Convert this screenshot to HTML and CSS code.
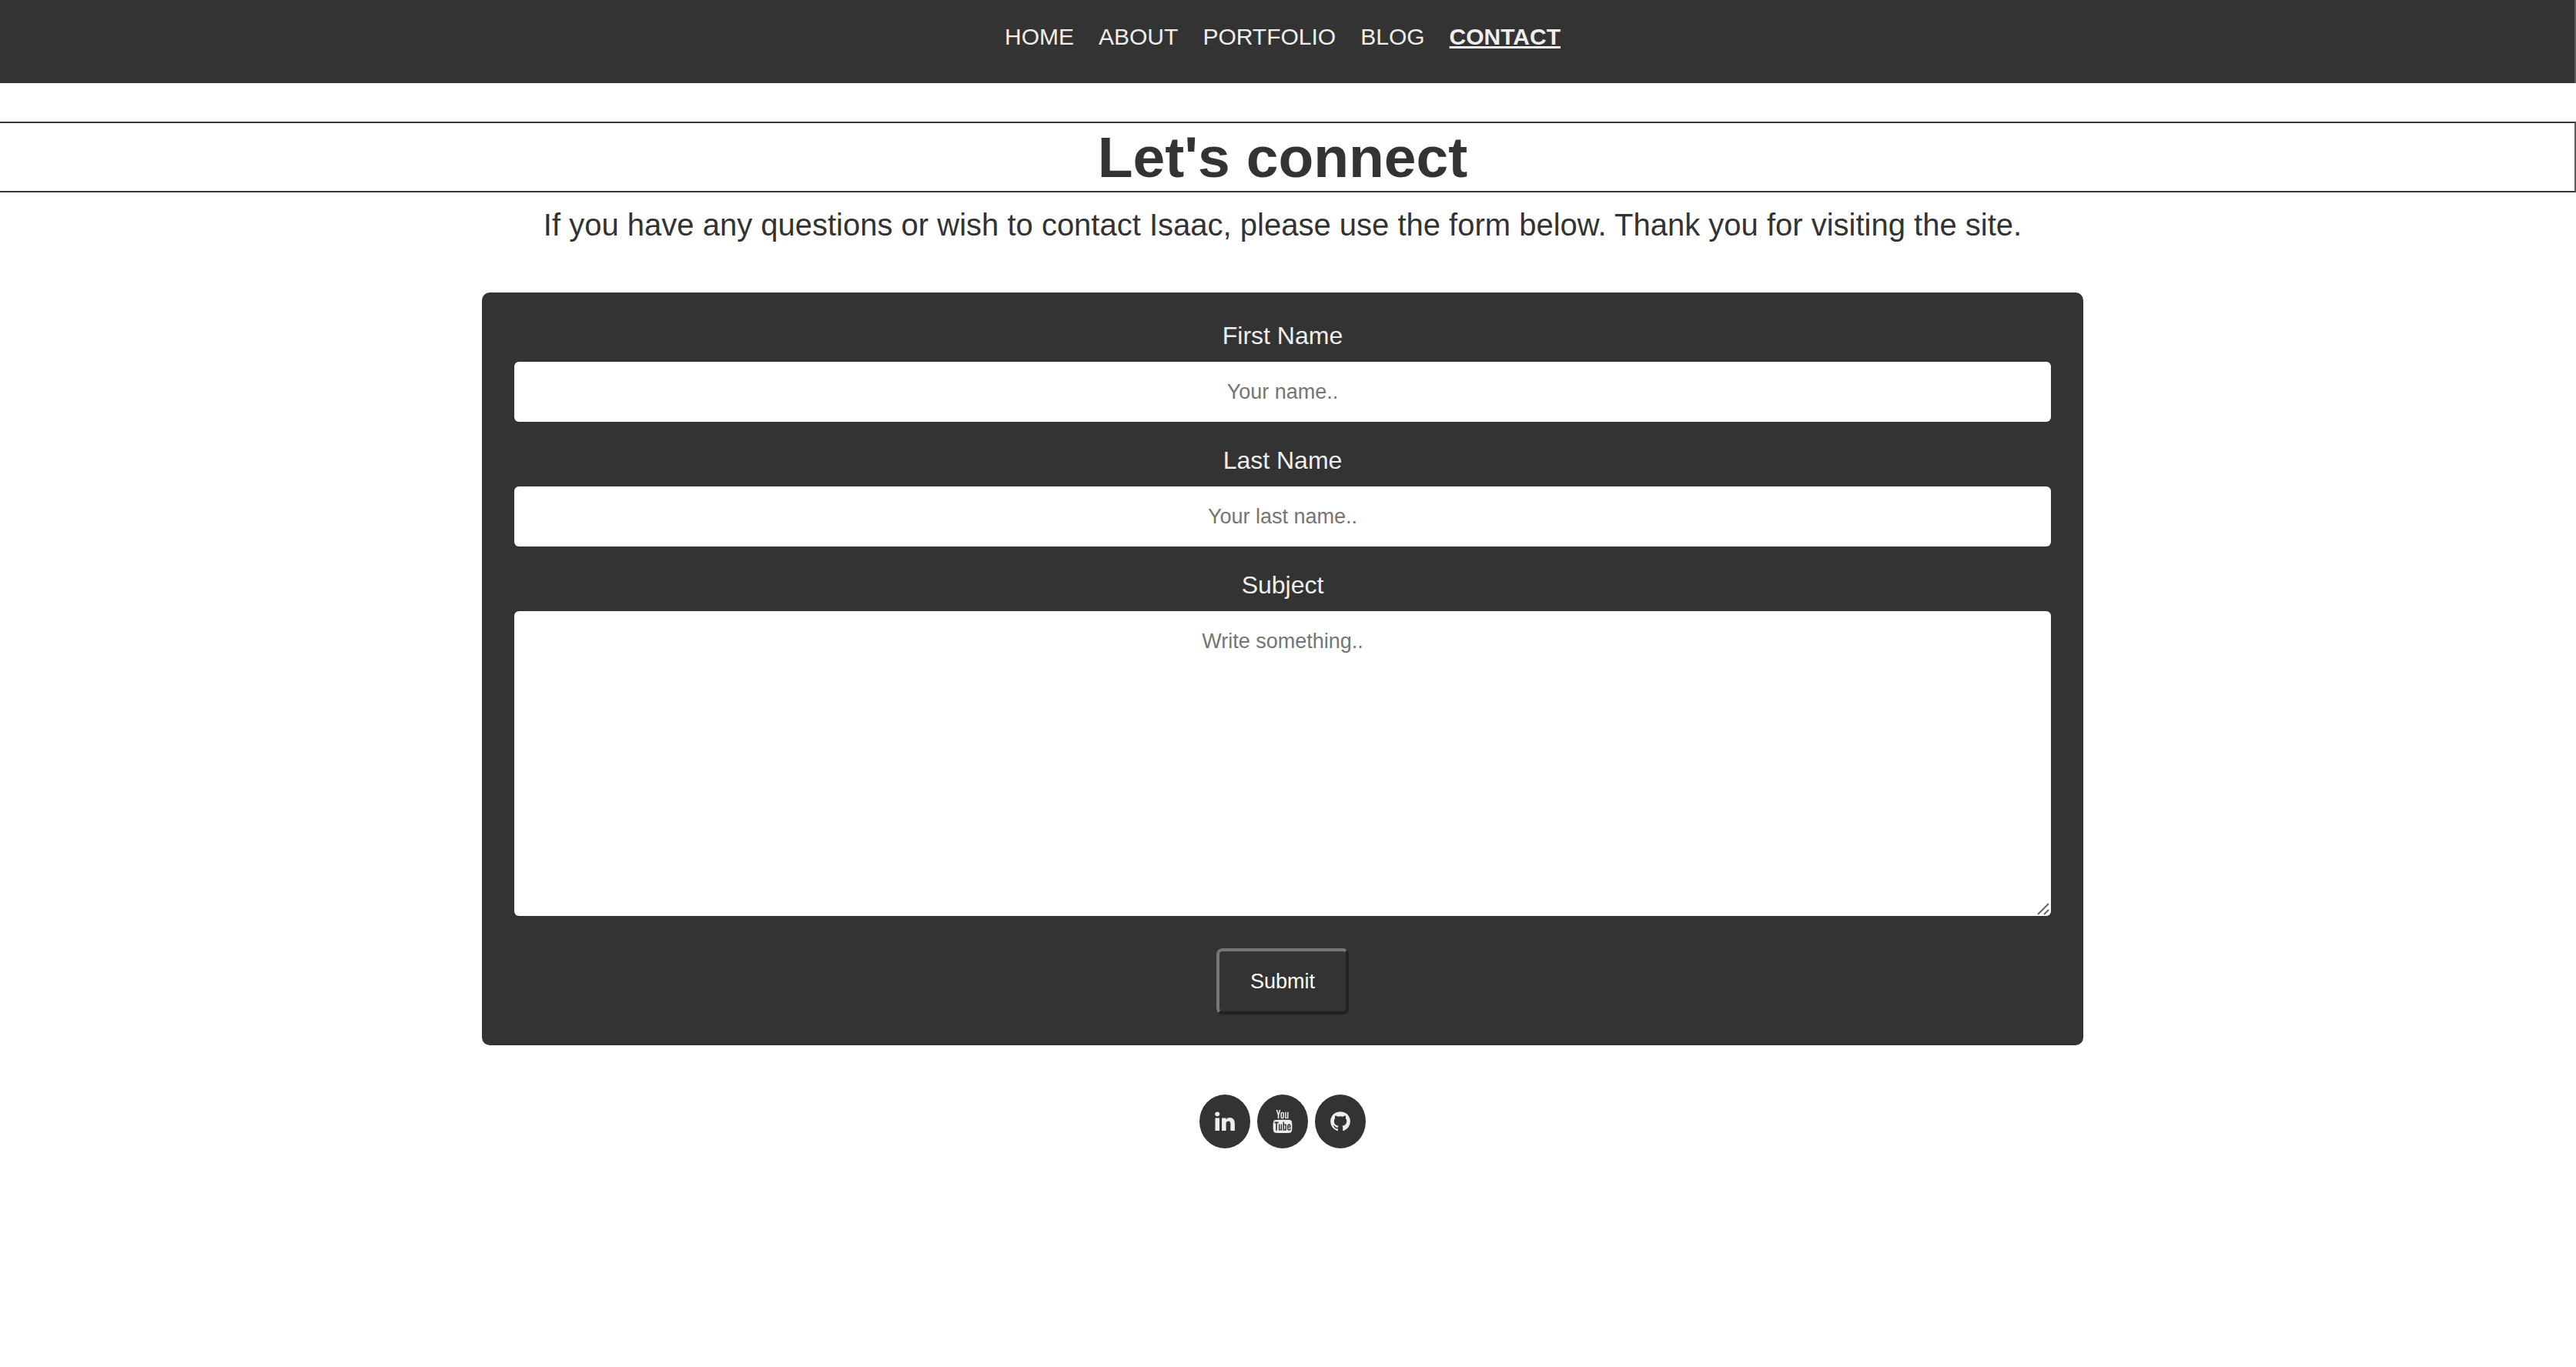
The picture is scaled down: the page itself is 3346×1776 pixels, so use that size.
FILE: index.html
```
<!DOCTYPE html>
<html lang="en">
<head>
  <meta charset="utf-8">
  <meta name="viewport" content="width=device-width, initial-scale=1">
  <title>Contact</title>
  <link rel="stylesheet" href="styles.css">
</head>
<body>
  <header class="site-header">
    <nav class="nav" aria-label="Main">
      <a class="nav-link" href="#home">HOME</a>
      <a class="nav-link" href="#about">ABOUT</a>
      <a class="nav-link" href="#portfolio">PORTFOLIO</a>
      <a class="nav-link" href="#blog">BLOG</a>
      <a class="nav-link nav-link-active" href="#contact" aria-current="page">CONTACT</a>
    </nav>
  </header>
  <main>
    <h1 class="title">Let's connect</h1>
    <div class="content">
      <p class="intro">If you have any questions or wish to contact Isaac, please use the form below. Thank you for visiting the site.</p>
      <form class="form">
        <label class="label" for="fname">First Name</label>
        <input class="field" type="text" id="fname" name="firstname" placeholder="Your name..">
        <label class="label" for="lname">Last Name</label>
        <input class="field" type="text" id="lname" name="lastname" placeholder="Your last name..">
        <label class="label" for="subject">Subject</label>
        <textarea class="field field-large" id="subject" name="subject" placeholder="Write something.."></textarea>
        <button class="submit" type="submit">Submit</button>
      </form>
    </div>
  </main>
  <footer class="social">
    <a class="social-link" href="#linkedin" aria-label="LinkedIn">
      <svg class="icon" viewBox="0 0 1792 1792" aria-hidden="true"><path d="M477 625v991h-330v-991h330zm21-306q1 73-50.5 122t-135.5 49h-2q-82 0-132-49t-50-122q0-74 51.5-122.5t134.5-48.5 133 48.5 51 122.5zm1166 729v568h-329v-530q0-105-40.5-164.5t-126.5-59.5q-63 0-105.5 34.5t-63.5 85.5q-11 30-11 81v553h-329q2-399 2-647t-1-296l-1-48h329v144h-2q20-32 41-56t56.5-52 87-43.5 114.5-15.5q171 0 275 113.5t104 332.5z"/></svg>
    </a>
    <a class="social-link" href="#youtube" aria-label="YouTube">
      <svg class="icon" viewBox="0 0 1792 1792" aria-hidden="true"><path d="M1099 1244v211q0 67-39 67-23 0-45-22v-301q22-22 45-22 39 0 39 67zm338 1v46h-90v-46q0-68 45-68t45 68zm-966-218h107v-94h-312v94h105v569h100v-569zm288 569h89v-494h-89v378q-30 42-57 42-18 0-21-21-1-3-1-35v-364h-89v391q0 49 8 73 12 37 58 37 48 0 102-61v54zm429-148v-197q0-73-9-99-17-56-71-56-50 0-93 54v-217h-89v663h89v-48q45 55 93 55 54 0 71-55 9-27 9-100zm338-10v-13h-91q0 51-2 61-7 36-40 36-46 0-46-69v-87h179v-103q0-79-27-116-39-51-106-51-68 0-107 51-28 37-28 116v173q0 79 29 116 39 51 108 51 72 0 108-53 18-27 21-54 2-9 2-58zm-608-913v-210q0-69-43-69t-43 69v210q0 70 43 70t43-70zm719 751q0 234-26 350-14 59-58 99t-102 46q-184 21-555 21t-555-21q-58-6-102.5-46t-57.5-99q-26-112-26-350 0-234 26-350 14-59 58-99t103-47q183-20 554-20t555 20q58 7 102.5 47t57.5 99q26 112 26 350zm-998-1276h102l-121 399v271h-100v-271q-14-74-61-212-37-103-65-187h106l71 263zm370 333v175q0 81-28 118-38 51-106 51-67 0-105-51-28-38-28-118v-175q0-80 28-117 38-51 105-51 68 0 106 51 28 37 28 117zm335-162v499h-91v-55q-53 62-103 62-46 0-59-37-8-24-8-75v-394h91v367q0 33 1 35 3 22 21 22 27 0 57-43v-381h91z"/></svg>
    </a>
    <a class="social-link" href="#github" aria-label="GitHub">
      <svg class="icon" viewBox="0 0 1792 1792" aria-hidden="true"><path d="M1664 896q0 251-146.500 451.500t-378.500 277.500q-27 5-39.500-7t-12.500-30v-211q0-97-52-142 57-6 102.500-18t94-39 81-66.500 53-105 20.500-150.500q0-121-79-206 37-91-8-204-28-9-81 11t-92 44l-38 24q-93-26-192-26t-192 26q-16-11-42.500-27t-83.500-38.500-86-13.500q-44 113-7 204-79 85-79 206 0 85 20.500 150t52.500 105 80.500 67 94 39 102.500 18q-40 36-49 103-21 10-45 15t-57 5-65.500-21.500-55.500-62.500q-19-32-48.500-52t-49.500-24l-20-3q-21 0-29 4.500t-5 11.500 9 14 13 12l7 5q22 10 43.500 38t31.500 51l10 23q13 38 44 61.500t67 30 69.500 7 55.500-3.500l23-4q0 38 .5 89t.5 54q0 18-13 30t-40 7q-232-77-378.500-277.500t-146.500-451.500q0-209 103-385.500t279.500-279.500 385.500-103 385.500 103 279.500 279.500 103 385.500z"/></svg>
    </a>
  </footer>
</body>
</html>
```
FILE: styles.css
```
:root {
  --dark: #333;
  --light: #eee;
  --edge: #5c5c5c;
}

* {
  box-sizing: border-box;
}

body {
  margin: 0;
  background: #fff;
  color: var(--dark);
  font-family: "Liberation Sans", Arial, Helvetica, sans-serif;
  font-size: 32px;
}

.site-header {
  padding: 30px 12px 42px 0;
  border-right: 2px solid var(--edge);
  background: var(--dark);
}

.nav {
  display: flex;
  flex-wrap: wrap;
  justify-content: center;
  gap: 32px;
}

.nav-link {
  color: var(--light);
  font-size: 30px;
  line-height: 36px;
  text-decoration: none;
}

.nav-link-active {
  font-weight: bold;
  text-decoration: underline;
}

.title {
  margin: 50px 0 0;
  padding-right: 12px;
  border: 2px solid var(--dark);
  border-left: 0;
  border-right-color: var(--edge);
  font-size: 75px;
  line-height: 88px;
  text-align: center;
}

.content {
  display: flex;
  flex-direction: column;
  align-items: center;
  padding-right: 14px;
}

.intro {
  margin: 18px 0 64px;
  font-size: 40px;
  line-height: 48px;
  text-align: center;
}

.form {
  display: flex;
  flex-direction: column;
  align-items: center;
  width: 62.43%;
  padding: 38px 42px 40px;
  border-radius: 10px;
  background: var(--dark);
}

.label {
  margin-bottom: 16px;
  color: var(--light);
  line-height: 36px;
}

.field {
  width: 100%;
  height: 78px;
  margin: 0 0 32px;
  padding: 24px;
  border: 0;
  border-radius: 6px;
  background: #fff;
  font-family: inherit;
  font-size: 27px;
  line-height: 30px;
  text-align: center;
}

.field::placeholder {
  color: #757575;
}

.field-large {
  height: 396px;
  margin-bottom: 42px;
  background: #fff url("data:image/svg+xml,%3Csvg xmlns='http://www.w3.org/2000/svg' width='18' height='18'%3E%3Cpath d='M1 16L15 2M9 16L15 10' stroke='%23666' stroke-width='2'/%3E%3C/svg%3E") no-repeat right bottom;
  resize: vertical;
}

.field-large::-webkit-resizer {
  background: transparent;
}

.submit {
  padding: 23px 40px;
  border: 4px solid;
  border-color: #767676 #212121 #212121 #767676;
  border-radius: 8px;
  background: var(--dark);
  color: #fff;
  font-family: inherit;
  font-size: 27px;
  line-height: 32px;
}

.social {
  display: flex;
  justify-content: center;
  gap: 9px;
  padding: 64px 14px 64px 0;
}

.social-link {
  display: flex;
  align-items: center;
  justify-content: center;
  width: 66px;
  height: 70px;
  border-radius: 50%;
  background: var(--dark);
}

.icon {
  width: 30px;
  height: 30px;
  fill: var(--light);
}
```
